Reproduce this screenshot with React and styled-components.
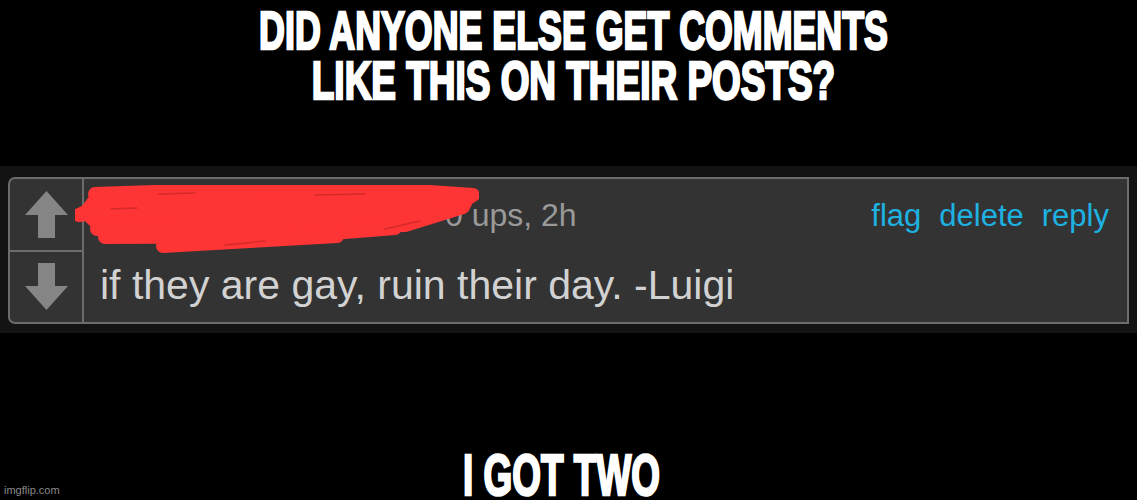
import React from "react";
import styled, { createGlobalStyle } from "styled-components";

const Global = createGlobalStyle`
  html, body { margin: 0; padding: 0; background: #000; }
  body { overflow: hidden; font-family: "Liberation Sans", Arial, sans-serif; }
`;

const Page = styled.div`
  position: relative;
  width: 1137px;
  height: 500px;
  background: #000;
  overflow: hidden;
`;

const Heading = styled.div`
  color: #fff;
  font-family: "Liberation Sans", Arial, sans-serif;
  font-weight: 700;
  font-size: ${(p) => p.$size}px;
  line-height: ${(p) => p.$lh}px;
  text-align: center;
  text-transform: uppercase;
  -webkit-text-stroke: 2.6px #fff;
  padding-left: ${(p) => (p.$shift > 0 ? p.$shift * 2 : 0)}px;
  padding-right: ${(p) => (p.$shift < 0 ? -p.$shift * 2 : 0)}px;
  margin-top: ${(p) => p.$top || 0}px;
  white-space: nowrap;
`;

const Line = styled.div`
  transform: scaleX(${(p) => p.$squeeze});
  transform-origin: center;
`;

const Band = styled.div`
  margin-top: 60px;
  background: #131313;
  padding: 11px 8px 9px 8px;
`;

const CommentBox = styled.div`
  position: relative;
  display: flex;
  height: 143px;
  background: #333333;
  border: 2px solid #6c6c6c;
  border-radius: 7px 0 0 7px;
`;

const VoteColumn = styled.div`
  width: 72px;
  display: flex;
  flex-direction: column;
  border-right: 2px solid #6c6c6c;
`;

const VoteCell = styled.div`
  flex: 1;
  display: flex;
  align-items: center;
  justify-content: center;
  & + & { border-top: 2px solid #6c6c6c; }
`;

const Content = styled.div`
  flex: 1;
  display: flex;
  flex-direction: column;
  padding: 16px 18px 0 16px;
`;

const HeaderRow = styled.div`
  display: flex;
  justify-content: space-between;
  align-items: baseline;
  line-height: 40px;
`;

const Meta = styled.div`
  color: #9a9a9a;
  font-size: 32px;
  white-space: nowrap;
`;

const Username = styled.span`
  display: inline-block;
  width: 345px;
  color: #1eb1e3;
`;

const Links = styled.div`
  display: flex;
  gap: 18px;
  font-size: 31px;
`;

const LinkText = styled.span`
  color: #1db2e2;
`;

const Body = styled.div`
  margin-top: 25px;
  color: #d2d2d2;
  font-size: 41px;
  line-height: 48px;
  white-space: nowrap;
`;

const Scribble = styled.svg`
  position: absolute;
  left: 65px;
  top: 6px;
`;

const Watermark = styled.div`
  position: absolute;
  left: 4px;
  bottom: 4px;
  color: #8a8a8a;
  font-family: "Liberation Sans", Arial, sans-serif;
  font-size: 11px;
  line-height: 12px;
`;

const Arrow = ({ down }) => (
  <svg width="43" height="47" viewBox="0 0 43 47" style={down ? { transform: "rotate(180deg)" } : undefined}>
    <polygon points="21.5,0 43,24 0,24" fill="#858585" />
    <rect x="13" y="23" width="17" height="24" fill="#858585" />
  </svg>
);

export default function App() {
  return (
    <>
      <Global />
      <Page>
        <Heading $size={53} $lh={50} $shift={5} $top={6}>
          <Line $squeeze={0.675}>DID ANYONE ELSE GET COMMENTS</Line>
          <Line $squeeze={0.697}>LIKE THIS ON THEIR POSTS?</Line>
        </Heading>
        <Band>
          <CommentBox>
            <VoteColumn>
              <VoteCell><Arrow /></VoteCell>
              <VoteCell><Arrow down /></VoteCell>
            </VoteColumn>
            <Content>
              <HeaderRow>
                <Meta><Username>anonuser</Username>0 ups, 2h</Meta>
                <Links>
                  <LinkText>flag</LinkText>
                  <LinkText>delete</LinkText>
                  <LinkText>reply</LinkText>
                </Links>
              </HeaderRow>
              <Body>if they are gay, ruin their day. -Luigi</Body>
            </Content>
            <Scribble width="404" height="70" viewBox="0 0 404 70">
              <polygon points="18,6 142,2 338,4 400,9 396,22 320,46 218,54 30,56 2,28" fill="#ff3434" />
              <g fill="none" stroke="#ff3434" strokeWidth="14" strokeLinecap="round" strokeLinejoin="round">
                <path d="M8 28 L395 12" />
                <path d="M20 9 L140 5 L340 6 L398 10" />
                <path d="M22 44 L330 40 L388 22" />
                <path d="M30 52 L220 51 L320 43" />
                <path d="M88 61 L175 56 L262 51" />
                <path d="M4 30 L60 20" />
              </g>
              <g fill="none" stroke="#c42626" strokeWidth="1.5" strokeLinecap="round" opacity="0.7">
                <path d="M36 24 L62 23" />
                <path d="M84 9 L120 8" />
                <path d="M240 10 L290 9" />
                <path d="M310 44 L345 36" />
                <path d="M150 60 L190 56" />
              </g>
            </Scribble>
          </CommentBox>
        </Band>
        <Heading $size={58} $lh={58} $shift={-7} $top={113}>
          <Line $squeeze={0.637}>I GOT TWO</Line>
        </Heading>
        <Watermark>imgflip.com</Watermark>
      </Page>
    </>
  );
}
